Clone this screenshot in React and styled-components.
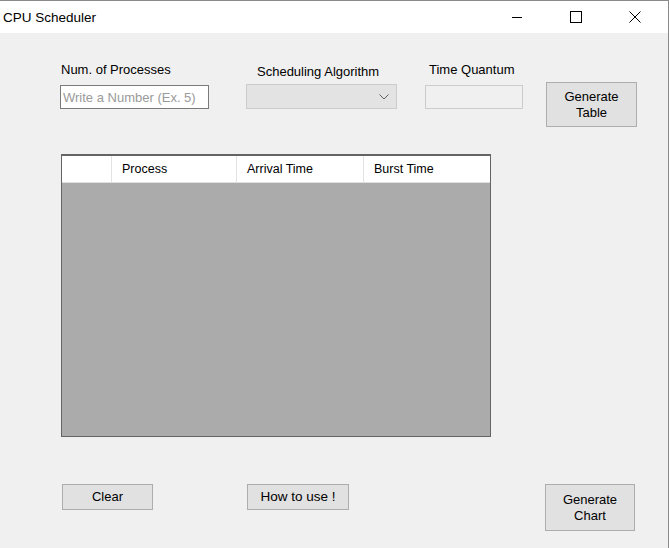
import React from "react";
import styled, { createGlobalStyle } from "styled-components";

const GlobalStyle = createGlobalStyle`
  html, body {
    margin: 0;
    padding: 0;
    background: #f0f0f0;
  }
  body {
    font-family: "Liberation Sans", Arial, sans-serif;
    color: #000;
  }
`;

const Window = styled.div`
  width: 669px;
  height: 548px;
  box-sizing: border-box;
  border-right: 1px solid #8a8a8a;
  border-top: 1px solid #8a8a8a;
  background: #f0f0f0;
  display: flex;
  flex-direction: column;
  overflow: hidden;
`;

const TitleBar = styled.div`
  height: 32px;
  background: #fff;
  display: flex;
  align-items: center;
  flex-shrink: 0;
  padding-right: 4px;
`;

const Title = styled.div`
  flex: 1;
  padding-left: 3px;
  font-size: 13.5px;
`;

const CaptionButton = styled.div`
  width: 59px;
  height: 32px;
  display: flex;
  align-items: center;
  justify-content: center;
`;

const Content = styled.div`
  flex: 1;
  display: flex;
  flex-direction: column;
  padding: 28px 0 0 0;
`;

const TopRow = styled.div`
  display: flex;
  align-items: flex-start;
  height: 68px;
`;

const Field = styled.div`
  display: flex;
  flex-direction: column;
  margin-left: ${(p) => p.$left}px;
  padding-top: ${(p) => p.$top || 0}px;
`;

const Label = styled.div`
  font-size: 13px;
  height: 17px;
  line-height: 17px;
  margin-left: ${(p) => p.$indent || 0}px;
  margin-bottom: ${(p) => p.$gap}px;
  white-space: nowrap;
`;

const TextBox = styled.div`
  width: ${(p) => p.$w}px;
  height: 24px;
  box-sizing: border-box;
  border: 1px solid ${(p) => (p.$disabled ? "#cccccc" : "#7a7a7a")};
  background: ${(p) => (p.$disabled ? "#f0f0f0" : "#fff")};
  font-size: 13px;
  color: #9a9a9a;
  display: flex;
  align-items: center;
  padding-left: 2px;
  white-space: nowrap;
`;

const Combo = styled.div`
  width: 151px;
  height: 25px;
  box-sizing: border-box;
  border: 1px solid #cccccc;
  background: #e3e3e3;
  display: flex;
  align-items: center;
  justify-content: flex-end;
  padding-right: 7px;
`;

const Button = styled.div`
  width: ${(p) => p.$w}px;
  height: ${(p) => p.$h}px;
  box-sizing: border-box;
  border: 1px solid #adadad;
  background: #e1e1e1;
  font-size: ${(p) => p.$fs || 13}px;
  line-height: 16px;
  text-align: center;
  display: flex;
  align-items: center;
  justify-content: center;
  margin-left: ${(p) => p.$left}px;
  margin-top: ${(p) => p.$top || 0}px;
`;

const Grid = styled.div`
  margin: 25px 0 0 61px;
  width: 430px;
  height: 283px;
  box-sizing: border-box;
  border: 1px solid #646464;
  border-top-width: 2px;
  background: #ababab;
  display: flex;
  flex-direction: column;
`;

const HeaderRow = styled.div`
  display: grid;
  grid-template-columns: 50px 125px 127px 1fr;
  height: 26px;
  background: #fff;
  border-bottom: 1px solid #e0e0e0;
`;

const HeaderCell = styled.div`
  border-right: 1px solid #e3e3e3;
  font-size: 12.5px;
  display: flex;
  align-items: center;
  padding-left: 10px;
  &:last-child {
    border-right: none;
  }
`;

const BottomRow = styled.div`
  display: flex;
  align-items: flex-start;
  margin-top: 47px;
`;

export default function App() {
  return (
    <>
      <GlobalStyle />
      <Window>
        <TitleBar>
          <Title>CPU Scheduler</Title>
          <CaptionButton>
            <svg width="12" height="12" viewBox="0 0 12 12">
              <line x1="1" y1="6.5" x2="11" y2="6.5" stroke="#000" strokeWidth="1" />
            </svg>
          </CaptionButton>
          <CaptionButton>
            <svg width="12" height="12" viewBox="0 0 12 12">
              <rect x="0.5" y="0.5" width="11" height="11" fill="none" stroke="#000" strokeWidth="1" />
            </svg>
          </CaptionButton>
          <CaptionButton>
            <svg width="12" height="12" viewBox="0 0 12 12">
              <path d="M0.5 0.5 L11.5 11.5 M11.5 0.5 L0.5 11.5" stroke="#000" strokeWidth="1" />
            </svg>
          </CaptionButton>
        </TitleBar>
        <Content>
          <TopRow>
            <Field $left={60}>
              <Label $indent={1} $gap={7}>Num. of Processes</Label>
              <TextBox $w={149}>Write a Number (Ex. 5)</TextBox>
            </Field>
            <Field $left={37} $top={2}>
              <Label $indent={11} $gap={4}>Scheduling Algorithm</Label>
              <Combo>
                <svg width="10" height="6" viewBox="0 0 10 6">
                  <path d="M0.5 0.5 L5 5 L9.5 0.5" fill="none" stroke="#606060" strokeWidth="1" />
                </svg>
              </Combo>
            </Field>
            <Field $left={28}>
              <Label $indent={4} $gap={7}>Time Quantum</Label>
              <TextBox $w={98} $disabled />
            </Field>
            <Button $w={91} $h={45} $left={23} $top={21}>
              Generate
              <br />
              Table
            </Button>
          </TopRow>
          <Grid>
            <HeaderRow>
              <HeaderCell />
              <HeaderCell>Process</HeaderCell>
              <HeaderCell>Arrival Time</HeaderCell>
              <HeaderCell>Burst Time</HeaderCell>
            </HeaderRow>
          </Grid>
          <BottomRow>
            <Button $w={91} $h={26} $left={62}>Clear</Button>
            <Button $w={102} $h={26} $left={94} $fs={13.5}>How to use !</Button>
            <Button $w={90} $h={47} $left={196}>
              Generate
              <br />
              Chart
            </Button>
          </BottomRow>
        </Content>
      </Window>
    </>
  );
}
